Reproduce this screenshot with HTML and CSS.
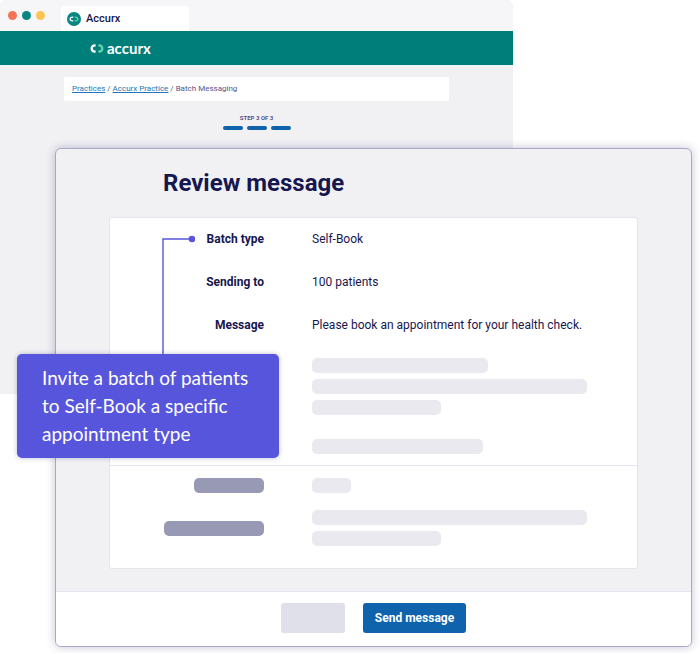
FILE: index.html
```html
<!DOCTYPE html>
<html lang="en">
<head>
    <meta charset="UTF-8">
    <meta name="viewport" content="width=device-width, initial-scale=1.0">
    <title>Accurx - Review message</title>
    <link rel="stylesheet" href="styles.css">
</head>
<body>

    <div class="scene">
        <div class="browser">
            <div class="tab-bar">
                <div class="dots">
                    <span class="dot red"></span>
                    <span class="dot green"></span>
                    <span class="dot yellow"></span>
                </div>
                <div class="tab">
                    <svg class="tab-icon" viewBox="0 0 14 14" aria-hidden="true">
                        <circle cx="7" cy="7" r="7" fill="#0a8583"/>
                        <path d="M6.2 5.2C4.300 4.900 3.200 5.700 3.200 7s1.100 2.100 3 1.800" fill="none" stroke="#fff" stroke-width="1.400"/>
                        <path d="M7.800 5.200C9.700 4.900 10.800 5.700 10.800 7s-1.100 2.100-3 1.800" fill="none" stroke="#5fd6a8" stroke-width="1.400"/>
                    </svg>
                    <span>Accurx</span>
                </div>
            </div>
            <header class="site-header">
                <svg class="logo-mark" viewBox="0 0 14 9" aria-hidden="true">
                    <path d="M5.600 1.600C3 1.100 1.700 2.500 1.700 4.500s1.300 3.400 3.900 2.900" fill="none" stroke="#fff" stroke-width="2.400"/>
                    <path d="M8.400 1.600C11 1.100 12.300 2.500 12.300 4.500S11 7.900 8.400 7.400" fill="none" stroke="#5fd6a8" stroke-width="2.400"/>
                </svg>
                <span class="logo-name">accurx</span>
            </header>
            <nav class="breadcrumb">
                <a href="#">Practices</a> / <a href="#">Accurx Practice</a> / Batch Messaging
            </nav>
            <div class="steps">
                <div class="steps-label">STEP 3 OF 3</div>
                <div class="steps-bars">
                    <span></span>
                    <span></span>
                    <span></span>
                </div>
            </div>
        </div>

        <main class="dialog">
            <h1>Review message</h1>
            <div class="card">
                <dl class="details">
                    <dt>Batch type</dt>
                    <dd>Self-Book</dd>
                    <dt>Sending to</dt>
                    <dd>100 patients</dd>
                    <dt>Message</dt>
                    <dd>Please book an appointment for your health check.</dd>
                </dl>
                <div class="lines message-lines">
                    <div class="line medium"></div>
                    <div class="line full"></div>
                    <div class="line short"></div>
                    <div class="line sign-off"></div>
                </div>
                <div class="extra">
                    <div class="line dark"></div>
                    <div class="line tiny"></div>
                    <div class="line dark wide"></div>
                    <div class="lines">
                        <div class="line full"></div>
                        <div class="line short"></div>
                    </div>
                </div>
            </div>
            <footer class="actions">
                <button type="button" class="secondary" aria-label="Back"></button>
                <button type="button" class="primary">Send message</button>
            </footer>
        </main>

        <svg class="connector" viewBox="0 0 33 120" aria-hidden="true">
            <path d="M1 120V4H29" fill="none" stroke="#5655dc" stroke-width="1.400"/>
            <circle cx="30" cy="4" r="3.300" fill="#5655dc"/>
        </svg>
        <p class="callout">Invite a batch of patients to Self-Book a specific appointment type</p>
    </div>

</body>
</html>
```

FILE: styles.css
```css
* {
    box-sizing: border-box;
}
body {
    margin: 0;
    background-color: white;
    color: #17174f;
    font-family: Roboto, Arial, sans-serif;
}
.scene {
    position: relative;
    display: flow-root;
}

/* browser window at the back */
.browser {
    width: 73.3%;
    min-height: 394px;
    background-color: #f1f1f4;
    border-radius: 6px 6px 0 0;
}
.tab-bar {
    display: flex;
    height: 31px;
    padding: 6px 8px 0;
    background-color: #f6f6f8;
    border-radius: 6px 6px 0 0;
}
.dots {
    display: flex;
    gap: 5px;
    width: 53px;
    padding-top: 5px;
}
.dot {
    width: 9px;
    height: 9px;
    border-radius: 50%;
}
.red {
    background-color: #f47458;
}
.green {
    background-color: #0a8583;
}
.yellow {
    background-color: #fdc453;
}
.tab {
    display: flex;
    align-items: center;
    gap: 5px;
    width: 128px;
    padding-left: 6px;
    background-color: white;
    border-radius: 4px 4px 0 0;
    font-size: 11px;
    font-weight: 500;
}
.tab-icon {
    width: 14px;
    height: 14px;
}
.site-header {
    display: flex;
    align-items: center;
    gap: 3px;
    height: 34px;
    padding-left: 90px;
    background-color: #007e7a;
    color: white;
}
.logo-mark {
    width: 14px;
    height: 9px;
}
.logo-name {
    font-family: Lato, sans-serif;
    font-size: 15px;
    font-weight: 700;
    line-height: 16px;
}
.breadcrumb {
    margin: 12px 64px 0;
    padding: 0 8px;
    background-color: white;
    border-radius: 2px;
    color: #55558a;
    font-size: 8px;
    line-height: 24px;
}
.breadcrumb a {
    color: #2076b8;
}
.steps {
    padding-top: 13px;
    color: #55558a;
    text-align: center;
}
.steps-label {
    font-size: 6px;
    font-weight: 700;
    line-height: 8px;
}
.steps-bars {
    display: flex;
    justify-content: center;
    gap: 4px;
    margin-top: 4px;
}
.steps-bars span {
    width: 20px;
    height: 4px;
    background-color: #0f63ac;
    border-radius: 2px;
}

/* review dialog */
.dialog {
    position: relative;
    margin: -246px 8px 6px 55px;
    background-color: #f1f1f4;
    border: 1px solid #aaa8c8;
    border-radius: 6px;
    box-shadow: 0 0 10px rgba(60, 55, 110, 0.3);
}
h1 {
    margin: 0;
    padding: 18px 107px;
    font-size: 24px;
    font-weight: 700;
    line-height: 32px;
}
.card {
    margin: 0 53px;
    background-color: white;
    border: 1px solid #e4e4ec;
    border-radius: 3px;
}
.details {
    display: grid;
    grid-template-columns: 154px 1fr;
    gap: 27px 48px;
    margin: 0;
    padding: 13px 0 12px;
    font-size: 12px;
    line-height: 16px;
}
.details dt {
    font-weight: 700;
    text-align: right;
}
.details dd {
    margin: 0;
}
.lines {
    display: flex;
    flex-direction: column;
    gap: 6px;
}
.message-lines {
    padding: 13px 50px 11px 202px;
    border-bottom: 1px solid #e4e4ee;
}
.line {
    height: 15px;
    background-color: #e9e9ef;
    border-radius: 5px;
}
.full {
    width: 100%;
}
.medium {
    width: 64%;
}
.short {
    width: 47%;
}
.tiny {
    width: 14%;
}
.sign-off {
    width: 62%;
    margin-top: 18px;
}
.extra {
    display: grid;
    grid-template-columns: 154px 1fr;
    align-items: center;
    gap: 17px 48px;
    padding: 12px 50px 22px 0;
}
.dark {
    justify-self: end;
    width: 70px;
    background-color: #9899b4;
}
.wide {
    width: 100px;
}
.actions {
    display: flex;
    justify-content: center;
    gap: 18px;
    margin-top: 22px;
    padding: 11px 0 13px;
    background-color: white;
    border-top: 1px solid #e4e4ee;
    border-radius: 0 0 5px 5px;
}
button {
    height: 30px;
    border: none;
    border-radius: 3px;
    cursor: pointer;
}
.secondary {
    width: 64px;
    background-color: #e0e0ea;
}
.primary {
    padding: 0 12px;
    background-color: #0f63ac;
    color: white;
    font-family: Roboto, Arial, sans-serif;
    font-size: 12px;
    font-weight: 700;
}

/* note pinned over the dialog */
.connector {
    position: absolute;
    top: 235px;
    left: 162px;
    width: 33px;
    height: 120px;
}
.callout {
    position: absolute;
    top: 354px;
    left: 17px;
    width: 262px;
    margin: 0;
    padding: 10px 25px;
    background-color: #5655dc;
    border-radius: 5px;
    box-shadow: 0 0 5px rgba(40, 40, 110, 0.3);
    color: white;
    font-family: Lato, sans-serif;
    font-size: 19px;
    line-height: 28px;
}
```
